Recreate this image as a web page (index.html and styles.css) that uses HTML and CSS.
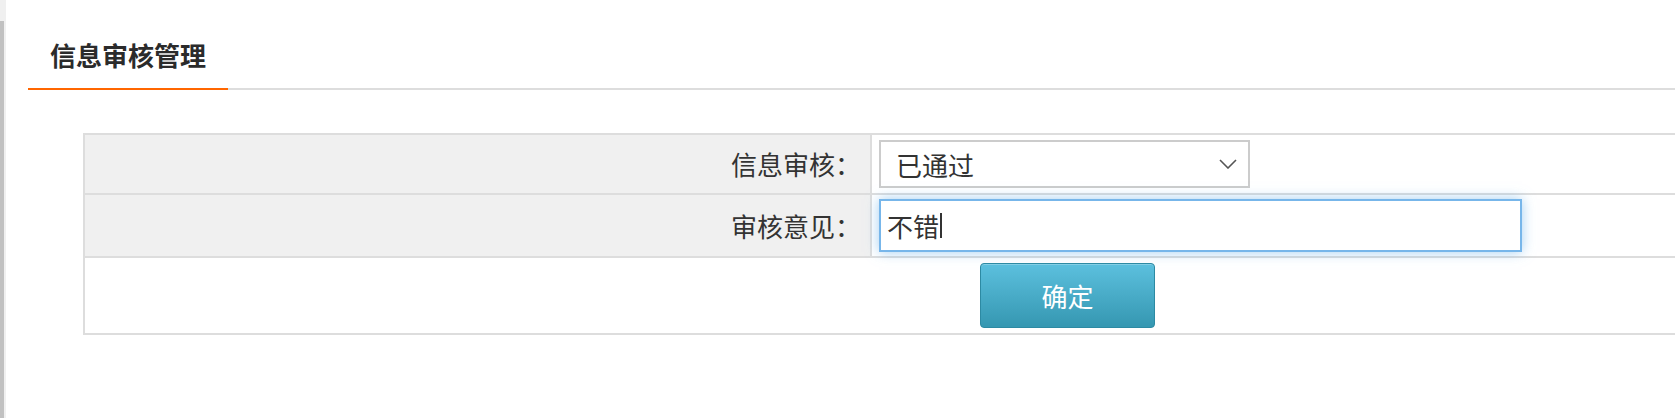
FILE: index.html
```html
<!DOCTYPE html>
<html lang="zh-CN">
<head>
<meta charset="utf-8">
<title>信息审核管理</title>
<link rel="stylesheet" href="styles.css">
</head>
<body>
<div class="strip"><div class="thumb"></div></div>
<div class="main">
  <div class="head">
    <div class="tab">信息审核管理</div>
  </div>
  <div class="form-wrap">
    <table class="form">
      <colgroup><col class="c1"><col></colgroup>
      <tr>
        <td class="label">信息审核：</td>
        <td class="field">
          <div class="select-wrap">
            <select class="select">
              <option>已通过</option>
              <option>未通过</option>
              <option>待审核</option>
            </select>
            <svg class="chev" width="18" height="10" viewBox="0 0 18 10"><polyline points="1,1 9,9 17,1" fill="none" stroke="#555" stroke-width="1.6"/></svg>
          </div>
        </td>
      </tr>
      <tr>
        <td class="label">审核意见：</td>
        <td class="field field-in">
          <div class="input-wrap">
            <input class="input" type="text" value="不错">
            <span class="caret"></span>
          </div>
        </td>
      </tr>
      <tr>
        <td class="actions" colspan="2"><button class="btn" type="button">确定</button></td>
      </tr>
    </table>
  </div>
</div>
</body>
</html>
```

FILE: styles.css
```css
html, body {
  margin: 0;
  padding: 0;
  background: #fff;
}
body {
  display: flex;
  min-height: 100vh;
  overflow: hidden;
  font-family: "Noto Sans CJK SC", "Noto Sans", sans-serif;
  color: #333;
}
.strip {
  width: 6px;
  flex: none;
  background: #f0f0f0;
  display: flex;
  flex-direction: column;
}
.thumb {
  margin-top: 21px;
  width: 4px;
  flex: 1;
  background: #c1c1c1;
}
.main {
  flex: 1;
  min-width: 0;
  overflow: hidden;
}
.head {
  margin-left: 22px;
  border-bottom: 2px solid #ddd;
  display: flex;
}
.tab {
  padding: 35px 22px 13px;
  font-size: 26px;
  line-height: 40px;
  font-weight: 700;
  color: #2b2b2b;
  border-bottom: 2px solid #f60;
  margin-bottom: -2px;
}
.form-wrap {
  margin: 43px 0 0 77px;
}
.form {
  border-collapse: collapse;
  table-layout: fixed;
  width: 1969px;
  border: 2px solid #ddd;
}
.c1 {
  width: 787px;
}
.form td {
  border: 2px solid #ddd;
  padding: 5px 7px;
  font-size: 26px;
}
.form td.label {
  background: #f0f0f0;
  text-align: right;
  padding-right: 9px;
  line-height: 36px;
  color: #333;
}
.select-wrap {
  position: relative;
  width: 371px;
}
.select {
  appearance: none;
  -webkit-appearance: none;
  display: block;
  width: 371px;
  height: 48px;
  box-sizing: border-box;
  border: 2px solid #ccc;
  border-radius: 0;
  background: #fff;
  padding: 0 40px 0 15px;
  font-family: "Noto Sans CJK SC", "Noto Sans", sans-serif;
  font-size: 26px;
  color: #333;
  outline: none;
}
.chev {
  position: absolute;
  right: 13px;
  top: 19px;
}
.form td.field-in {
  padding: 4px 7px;
}
.input-wrap {
  position: relative;
  width: 643px;
}
.input {
  display: block;
  width: 643px;
  height: 53px;
  box-sizing: border-box;
  border: 2px solid #77b6ea;
  box-shadow: 0 0 12px rgba(102, 175, 233, 0.6);
  padding: 0 6px;
  font-family: "Noto Sans CJK SC", "Noto Sans", sans-serif;
  font-size: 26px;
  color: #333;
  outline: none;
  background: #fff;
}
.caret {
  position: absolute;
  left: 61px;
  top: 14px;
  width: 2px;
  height: 25px;
  background: #333;
}
.actions {
  text-align: center;
}
.btn {
  display: inline-block;
  vertical-align: top;
  width: 175px;
  height: 65px;
  box-sizing: border-box;
  border: 1px solid #2d8aa3;
  border-radius: 4px;
  background: linear-gradient(#5cc0de, #3597b1);
  color: #fff;
  font-family: "Noto Sans CJK SC", "Noto Sans", sans-serif;
  font-size: 26px;
  cursor: pointer;
  box-shadow: inset 0 1px 0 rgba(255,255,255,0.25);
}
```
